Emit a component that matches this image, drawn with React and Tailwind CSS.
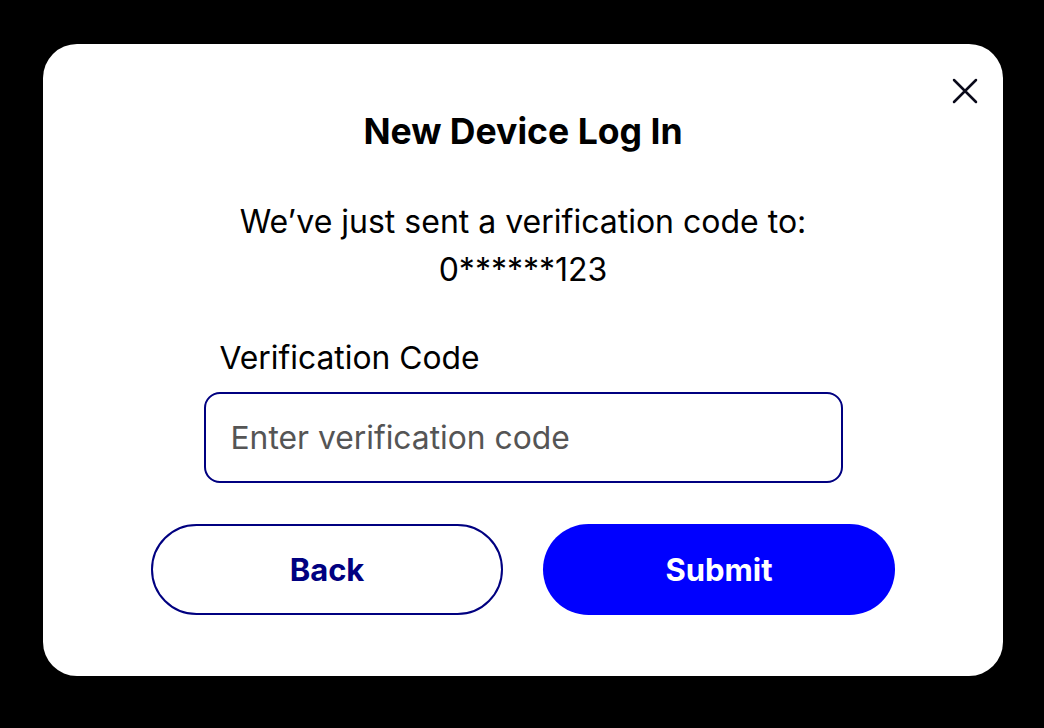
import React from "react";

function CloseIcon() {
  return (
    <svg width="26" height="26" viewBox="0 0 26 26" fill="none">
      <path d="M2 2 L24 24 M24 2 L2 24" stroke="#0a0a1a" strokeWidth="2.5" strokeLinecap="round" />
    </svg>
  );
}

export default function App() {
  return (
    <div className="w-[1044px] h-[728px] bg-black pt-[44px] pl-[43px] font-['Inter',sans-serif]">
      <div className="relative w-[960px] h-[632px] bg-white rounded-[34px] flex flex-col items-center">
        <button aria-label="Close" className="absolute right-[25px] top-[34px]">
          <CloseIcon />
        </button>

        <h1 className="mt-[68px] text-[35.6px] leading-[40px] font-bold text-black">New Device Log In</h1>

        <p className="mt-[46px] text-[32px] leading-[48px] text-black text-center">
          We’ve just sent a verification code to:
          <br />
          0******123
        </p>

        <div className="mt-[44px] w-[639px] flex flex-col">
          <label className="pl-[16px] text-[31.8px] leading-[40px] text-black">Verification Code</label>
          <input
            placeholder="Enter verification code"
            className="mt-[14px] h-[91px] w-full rounded-[16px] border-2 border-[#000080] px-[25px] text-[31.8px] text-black placeholder:text-[#555555] outline-none"
          />
        </div>

        <div className="mt-[41px] flex gap-[40px]">
          <button className="w-[352px] h-[91px] pt-[2px] rounded-full border-2 border-[#000080] text-[31px] font-bold text-[#000080]">
            Back
          </button>
          <button className="w-[352px] h-[91px] pt-[2px] rounded-full bg-[#0000ff] text-[31px] font-bold text-white">
            Submit
          </button>
        </div>
      </div>
    </div>
  );
}
